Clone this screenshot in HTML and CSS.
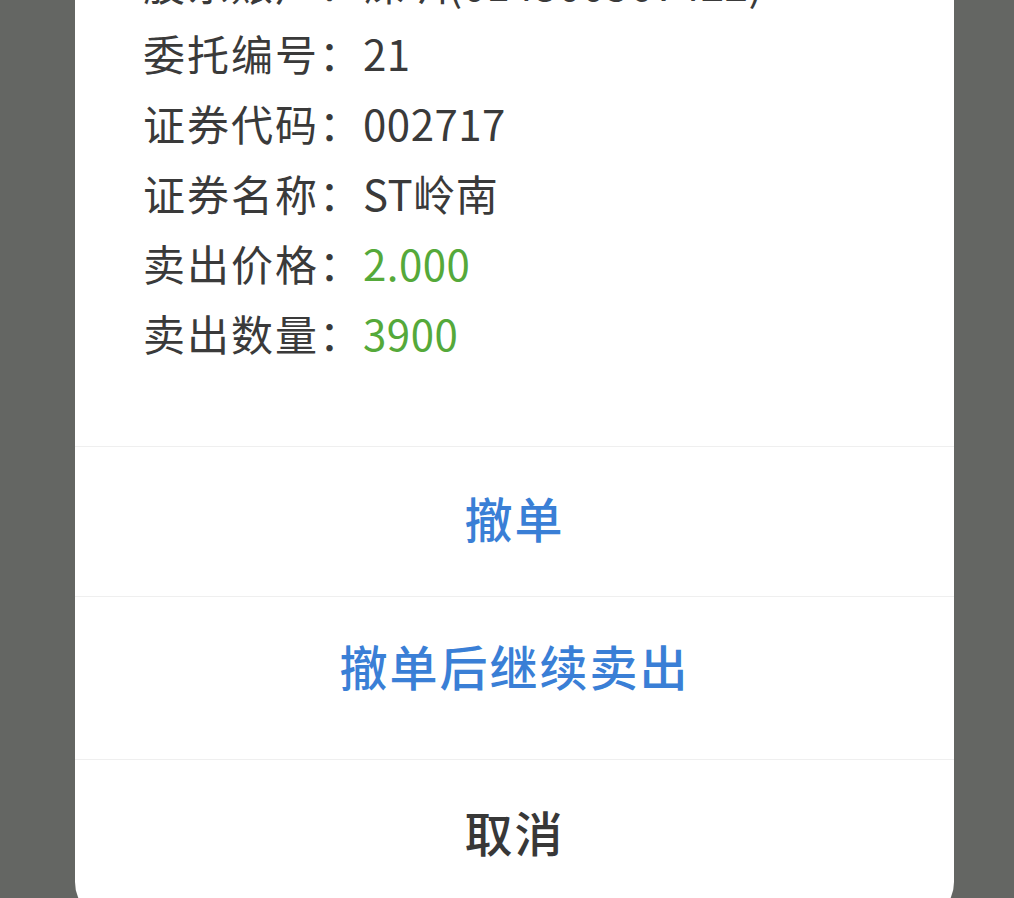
FILE: index.html
```html
<!DOCTYPE html>
<html lang="zh-CN">
<head>
<meta charset="UTF-8" />
<meta name="viewport" content="width=device-width, initial-scale=1" />
<title>撤单确认</title>
<link rel="stylesheet" href="styles.css">
</head>
<body>

<div class="dialog">
  <ul class="info">
    <li><span class="label">股东账户：</span><span class="value">深圳(014300567422)</span></li>
    <li><span class="label">委托编号：</span><span class="value">21</span></li>
    <li><span class="label">证券代码：</span><span class="value">002717</span></li>
    <li><span class="label">证券名称：</span><span class="value">ST岭南</span></li>
    <li><span class="label">卖出价格：</span><span class="value green">2.000</span></li>
    <li><span class="label">卖出数量：</span><span class="value green">3900</span></li>
  </ul>

  <button class="action first">撤单</button>
  <button class="action second">撤单后继续卖出</button>
  <button class="action cancel">取消</button>
</div>

</body>
</html>
```

FILE: styles.css
```css
html, body {
  margin: 0;
  height: 898px;
  overflow: hidden;
}
body {
  background-color: #646663;
  font-family: "Noto Sans CJK SC", "Noto Sans", sans-serif;
}
.dialog {
  margin: -52px 60px 0 75px;
  background: #fff;
  border-radius: 0 0 40px 40px;
  height: 974px;
  overflow: hidden;
}
.info {
  list-style: none;
  margin: 0;
  padding: 0 0 78px 68px;
  border-bottom: 1px solid #efefef;
}
.info li {
  height: 70px;
  line-height: 70px;
  font-size: 42px;
  color: #3a3a3a;
  white-space: nowrap;
}
.label {
  letter-spacing: 2px;
}
.value {
  letter-spacing: 0.5px;
}
.green {
  color: #55a93a;
}
.action {
  display: flex;
  align-items: center;
  justify-content: center;
  width: 100%;
  margin: 0;
  padding: 0;
  border: none;
  border-bottom: 1px solid #efefef;
  background: transparent;
  font-family: inherit;
  font-size: 48px;
  font-weight: 500;
  letter-spacing: 2px;
  color: #3a7fd6;
}
.first {
  height: 150px;
  padding-bottom: 10px;
}
.second {
  height: 163px;
  padding-bottom: 26px;
}
.cancel {
  height: 160px;
  padding-bottom: 18px;
  border-bottom: none;
  color: #383838;
}
```
